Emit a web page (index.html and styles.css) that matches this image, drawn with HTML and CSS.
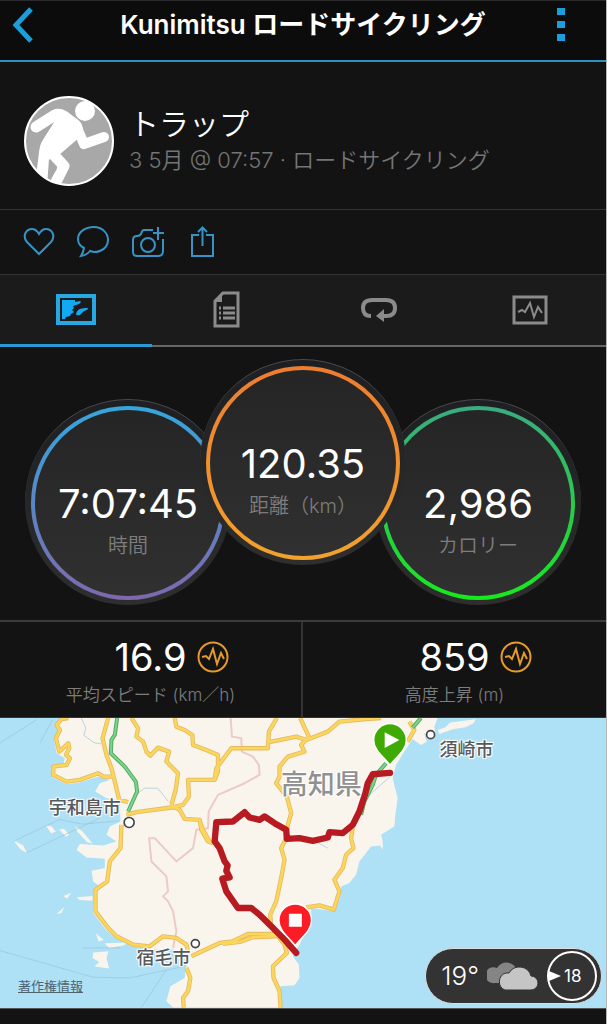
FILE: index.html
```html
<!DOCTYPE html>
<html lang="ja">
<head>
    <meta charset="UTF-8">
    <meta name="viewport" content="width=device-width, initial-scale=1.0">
    <title>Kunimitsu ロードサイクリング</title>
    <link rel="stylesheet" href="styles.css">
</head>
<body>
    <header class="header">
        <button class="icon-btn" aria-label="戻る">
            <svg width="22" height="36" viewBox="0 0 22 36"><path d="M19 2 4 18l15 16" fill="none" stroke="#1b9fdc" stroke-width="5"/></svg>
        </button>
        <h1>Kunimitsu ロードサイクリング</h1>
        <button class="icon-btn menu" aria-label="メニュー">
            <svg width="8" height="34" viewBox="0 0 8 34" fill="#1b9fdc"><path d="M0 0h8v7H0zM0 13h8v7H0zM0 26h8v7H0z"/></svg>
        </button>
    </header>

    <section class="profile">
        <svg class="avatar" viewBox="0 0 90 90">
            <defs><clipPath id="face"><circle cx="45" cy="45" r="44"/></clipPath></defs>
            <circle cx="45" cy="45" r="44" fill="#a8a8a8"/>
            <g clip-path="url(#face)" fill="#fff" stroke="#fff" stroke-linecap="round" stroke-linejoin="round">
                <circle cx="61" cy="15" r="10" stroke="none"/>
                <path d="M12 31 31 19" stroke-width="11" fill="none"/>
                <path d="M31 14q6-1 11 2l12 9q5 5 4 13L37 56l-13 7-2 27H12l4-34q1-8 4-12l12-19z" stroke-width="2"/>
                <path d="m54 34 6 14 20-7" stroke-width="10" fill="none"/>
                <path d="m28 57 12 13-9 18" stroke-width="11" fill="none"/>
            </g>
            <path d="m25 64 8 9-8 12z" fill="#a8a8a8"/>
            <circle cx="45" cy="45" r="44" fill="none" stroke="#fff" stroke-width="2"/>
        </svg>
        <div>
            <h2>トラップ</h2>
            <p>3 5月 @ 07:57 · ロードサイクリング</p>
        </div>
    </section>

    <div class="actions">
        <button class="icon-btn" aria-label="いいね">
            <svg width="32" height="32" viewBox="0 0 32 32"><path d="M16 28 4 16C-1 10 3 3 9 3q4 0 7 5 3-5 7-5c6 0 10 7 5 13z"/></svg>
        </button>
        <button class="icon-btn" aria-label="コメント">
            <svg width="32" height="32" viewBox="0 0 32 32"><path d="M17 1C8 1 1 6 1 13q0 6 6 9-1 5-3 8 6-1 9-5l4 1c8 0 14-5 14-12S25 1 17 1z"/></svg>
        </button>
        <button class="icon-btn" aria-label="写真を追加">
            <svg width="34" height="32" viewBox="0 0 34 32"><path d="M22 4H13q-2 0-3 4-1 2-4 2Q2 10 2 14v12q0 4 4 4h21q5 0 5-5V13"/><circle cx="17" cy="19" r="7"/><path d="M27 1v13M22 7h11"/></svg>
        </button>
        <button class="icon-btn" aria-label="共有">
            <svg width="32" height="32" viewBox="0 0 32 32"><path d="M12 9H5v21h21V9h-7M15.500 20V2M11 6l4.500-4.500L20 6"/></svg>
        </button>
    </div>

    <nav class="tabs">
        <button class="tab active" aria-label="地図">
            <svg width="40" height="32" viewBox="0 0 40 32"><path d="M2 2h36v27H2z" fill="none" stroke="#27a8e3" stroke-width="4"/><path d="M6 6h13v2l5-1q2 1-1 3l-6 2 1 2-2 2 2 2-3 2-1 2-4 1-1 2H6zM20 20q1-7 12-6 0 2-4 3l-4 4q-4 1-4-1z" fill="#11a9f2"/></svg>
        </button>
        <button class="tab" aria-label="統計">
            <svg width="28" height="38" viewBox="0 0 28 38"><path d="M10 2h15v33H2V10z" fill="none" stroke="#8b8b8b" stroke-width="3"/><path d="M9 1v10H1z" fill="#8b8b8b"/><path d="M6 17h2m2 0h12M6 22h2m2 0h12M6 27h2m2 0h12" stroke="#8b8b8b" stroke-width="3"/></svg>
        </button>
        <button class="tab" aria-label="ラップ">
            <svg width="38" height="28" viewBox="0 0 38 28"><path d="M11 20Q3 20 3 12t9-8h14q9 0 9 8t-9 8h-3" fill="none" stroke="#8b8b8b" stroke-width="4"/><path d="m16 20 8-7v13z" fill="#8b8b8b"/></svg>
        </button>
        <button class="tab" aria-label="グラフ">
            <svg width="36" height="30" viewBox="0 0 36 30"><path d="M2 2h32v26H2z" fill="none" stroke="#8b8b8b" stroke-width="3"/><path d="m6 17 4-2 3 2 5-9 4 14 4-10 4 6" fill="none" stroke="#8b8b8b" stroke-width="2"/></svg>
        </button>
    </nav>

    <main>
        <section class="gauges">
            <div class="gauge time">
                <div class="ring"><strong>7:07:45</strong><span>時間</span></div>
            </div>
            <div class="gauge distance">
                <div class="ring"><strong>120.35</strong><span>距離（km）</span></div>
            </div>
            <div class="gauge calories">
                <div class="ring"><strong>2,986</strong><span>カロリー</span></div>
            </div>
        </section>

        <section class="stats">
            <div class="stat">
                <div class="stat-value">
                    <strong>16.9</strong>
                    <button class="icon-btn" aria-label="スピードのグラフ">
                        <svg width="32" height="32" viewBox="0 0 32 32"><circle cx="16" cy="16" r="14.500"/><path d="m5 16 4-1 3 3 4-10 4 15 4-11 3 6"/></svg>
                    </button>
                </div>
                <span>平均スピード (km／h)</span>
            </div>
            <div class="stat">
                <div class="stat-value">
                    <strong>859</strong>
                    <button class="icon-btn" aria-label="高度のグラフ">
                        <svg width="32" height="32" viewBox="0 0 32 32"><circle cx="16" cy="16" r="14.500"/><path d="m5 16 4-1 3 3 4-10 4 15 4-11 3 6"/></svg>
                    </button>
                </div>
                <span>高度上昇 (m)</span>
            </div>
        </section>

        <section class="map">
            <svg class="map-canvas" viewBox="0 9 1821 870">
                <defs>
                    <path id="roads" d="M205 9 185 12 170 30 180 45 168 70 178 110 205 85 208 100 198 120 210 130 200 150 160 155 160 180 200 200 240 195 295 175 310 185 340 185
                        M325 9 308 70 320 120 335 160 345 200 358 255 385 262
                        M395 9 415 40 410 65 430 80 440 110 452 122 475 98 508 110 500 140 535 175 528 225 515 270
                        M380 300 410 292 515 278 550 270 568 245 565 195 645 195 655 170 655 120 620 105 580 90 578 60 555 45 530 35 525 9
                        M515 272 540 285 555 312 600 315 605 345 625 380 640 385M600 318 610 345 630 380
                        M365 330 362 400 330 440 322 500 287 525 287 590 325 640 350 665 400 690 450 695 490 665 530 670 560 690 565 710
                        M575 725 660 685 700 680 745 658 830 658 855 690 862 715 820 755 822 790 840 830 843 879M670 688 720 682 760 668 840 664
                        M560 760 572 790 565 830 550 850 552 879M645 195 650 160 695 100 725 100 805 100 808 50 832 9
                        M805 82 890 65 920 75 985 50 1020 20 1100 12 1145 9M902 9 928 65 905 90 915 110 865 125 840 155 840 185 830 205 862 245 875 295 865 330 858 375 845 400 855 435 845 490 830 560 812 600 815 640
                        M1060 340 1055 370 1062 400 1040 420 1030 460 1005 495 1020 530 1003 585 960 572 920 578M1225 80 1245 45 1230 20"/>
                    <path id="expressway" d="M352 9 345 60 335 75 333 115 375 155 408 200 412 230 385 290M1085 300 1095 260 1120 210 1130 180 1160 145M1240 38 1265 9"/>
                </defs>
                <!-- land -->
                <g fill="#f9f5ed">
                    <path d="M195 9 168 28 175 50 162 72 170 115 195 130 190 148 152 160 158 188 200 208 240 203 295 185 330 195 300 205 286 230 320 250 360 256 362 320 330 335 320 360 350 380 310 392 240 388 230 405 260 428 315 432 315 460 275 468 280 500 300 515 282 530 280 595 318 645 350 672 400 696 460 704 520 705 570 720 558 762 555 790 512 815 500 860 520 879 845 879 842 815 885 812 900 790 898 750 880 725 900 690 935 620 935 580 1002 590 1022 550 1025 515 1050 505 1070 480 1080 440 1115 395 1142 392 1150 405 1150 378 1145 360 1185 335 1188 300 1195 250 1180 190 1190 150 1215 110 1240 72 1265 90 1282 80 1275 55 1310 60 1305 35 1315 9z"/>
                    <path d="m1315 45 24-8 12-14 30-4 48-6-6 12-24 12-38 6-24 8-16 6zM138 332l16 2 14 16-14 6zM178 344l14-2 16 18-10 6zM226 334l20 14 32 38-16-4-30-32zM40 376l30 16 10 22-18-10zM190 544l24-10-12 18zM230 548l48-4v14l-40-2zM170 598l24-22-10 20zM288 656l24 20-16 4zM314 686l66-2-6 8-46 8zM280 714l46-4-6 20 8 32-44-6 14-14-20-12z"/>
                </g>
                <!-- ferry lines, rivers -->
                <path d="m0 84 110-70m48 0-38 70M40 380l138-66 70 14 110-10M80 414l220-104M0 708l280 80 110 2 170-36M250 700h110M500 765 425 879M244 9l14 30-6 22 30 22 22 4M414 236l20-16h40l32 40M955 384l30 16M1110 240l68-60" fill="none" stroke="#9bc3db" stroke-width="2"/>
                <!-- prefecture border -->
                <path d="M520 700 530 650 520 590 505 560 490 545 505 530 500 485 455 440 448 370 465 370 530 440 580 400 590 345 625 340 627 290 655 240 735 205 780 180 778 150 760 125 727 110 725 70 697 65 693 9" fill="none" stroke="#edcac6" stroke-width="6" stroke-linejoin="round"/>
                <g fill="none" stroke-linejoin="round">
                    <use href="#roads" stroke="#e5b960" stroke-width="13"/>
                    <use href="#roads" stroke="#fbd65c" stroke-width="8"/>
                    <use href="#expressway" stroke="#50aa62" stroke-width="12"/>
                    <use href="#expressway" stroke="#7bd58a" stroke-width="6"/>
                </g>
                <g fill="#fff" stroke="#444" stroke-width="5">
                    <circle cx="388" cy="323" r="15"/><circle cx="587" cy="687" r="12"/><circle cx="1294" cy="59" r="12"/>
                </g>
            </svg>
            <span class="place uwajima">宇和島市</span>
            <span class="place sukumo">宿毛市</span>
            <span class="place susaki">須崎市</span>
            <span class="place kochi">高知県</span>
            <svg class="map-canvas ride" viewBox="0 9 1821 870">
                <path d="M1172 174 1120 178 1105 205 1098 235 1080 290 1060 330 1030 355 990 352 985 368 940 378 900 370 862 372 860 345 825 325 795 305 780 315 750 308 735 292 700 320 650 322 645 380 660 400 675 440 684 452 680 468 690 488 668 492 680 530 715 580 755 580 780 600 815 635 855 675 890 715" fill="none" stroke="#b71a20" stroke-width="19" stroke-linejoin="round" stroke-linecap="round"/>
                <!-- start and finish pins -->
                <g stroke="#fff" stroke-width="4">
                    <path d="M1172 151c-12-20-49-42-49-76a49 49 0 0 1 98 0c0 34-37 56-49 76z" fill="#40aa05"/>
                    <path d="M887 693c-12-20-49-42-49-76a49 49 0 0 1 98 0c0 34-37 56-49 76z" fill="#fb1d25"/>
                </g>
                <path d="m1156 52 44 23-44 24zM868 597h39v39h-39z" fill="#fff"/>
            </svg>
            <a class="legal" href="#">著作権情報</a>

            <div class="weather">
                <span>19°</span>
                <svg width="52" height="30" viewBox="0 0 52 30">
                    <path d="M8 22a8 8 0 1 1 2-15 11 11 0 0 1 19 0v15z" fill="#858585"/>
                    <path d="M18 29a9 9 0 0 1 1-17h3a12 12 0 0 1 22 3 7 7 0 0 1 0 14z" fill="#c5c5c5" stroke="#333" stroke-width="1"/>
                </svg>
                <div class="wind">
                    <svg width="12" height="10" viewBox="0 0 12 10"><path d="m0 0 12 5-12 5z" fill="#fff"/></svg>
                    <span>18</span>
                </div>
            </div>
        </section>
    </main>
</body>
</html>
```
FILE: styles.css
```css
* {
    box-sizing: border-box;
}

body {
    margin: 0;
    min-height: 100vh;
    background: #131313;
    border-right: 1px solid #b5b5b5;
    color: #fff;
    font-family: Inter, "Noto Sans CJK JP", sans-serif;
}

h1, h2, p {
    margin: 0;
    font-weight: 400;
}

svg {
    display: block;
}

.icon-btn, .tab {
    padding: 0;
    border: 0;
    background: none;
    cursor: pointer;
}

.header {
    display: grid;
    grid-template-columns: 1fr auto 1fr;
    align-items: center;
    height: 62px;
    padding: 0 12px 12px;
    background: #0c0c0c;
    border-top: 1px solid #2b2b2b;
    border-bottom: 2px solid #2f8fc4;
}

.header .icon-btn {
    justify-self: start;
}

.header .menu {
    justify-self: end;
    padding: 0 29px;
    margin-right: 0;
    padding-left: 0;
}

.header h1 {
    font-size: 26px;
    font-weight: 600;
    line-height: 36px;
}

.profile {
    display: flex;
    gap: 15px;
    padding: 34px 24px 23px;
    border-bottom: 1px solid #333;
}

.avatar {
    width: 90px;
    height: 90px;
    flex: none;
}

.profile h2 {
    margin-top: 8px;
    font-size: 30px;
    line-height: 40px;
    font-weight: 350;
}

.profile p {
    color: #757575;
    font-size: 22px;
    line-height: 32px;
    font-weight: 350;
}

.actions {
    display: flex;
    gap: 22px;
    padding: 16px 23px;
    border-bottom: 1px solid #333;
}

.actions svg {
    fill: none;
    stroke: #3793c4;
    stroke-width: 2;
}

.tabs {
    display: grid;
    grid-template-columns: repeat(4, 1fr);
    height: 72px;
    background: #1b1b1b;
}

.tab {
    display: flex;
    justify-content: center;
    align-items: center;
    border-bottom: 2px solid #666;
}

.tab.active {
    border-bottom: 3px solid #2a9bd2;
}

.gauges {
    display: flex;
    justify-content: center;
    align-items: flex-end;
    height: 273px;
    padding: 12px 0 15px;
}

.gauge {
    width: 206px;
    height: 206px;
    flex: none;
    padding: 6px;
    border-radius: 50%;
    border-top: 1px solid #4a4a4c;
    background: linear-gradient(#1e1f22, #2e2e2e);
}

.ring {
    display: flex;
    flex-direction: column;
    align-items: center;
    height: 194px;
    padding-top: 72px;
    border: 4px solid transparent;
    border-radius: 50%;
}

.gauge strong {
    font-size: 40px;
    line-height: 44px;
    font-weight: 400;
}

.gauge span {
    color: #7d7d7d;
    font-size: 20px;
    line-height: 40px;
    font-weight: 350;
}

.time .ring {
    background: linear-gradient(#252525, #303030) padding-box, linear-gradient(#35a6dc, #7e68ad) border-box;
}

.distance {
    position: relative;
    align-self: flex-start;
    margin: 0 -31px;
}

.distance .ring {
    background: linear-gradient(#252525, #303030) padding-box, linear-gradient(#ed7d31, #f2a22c) border-box;
}

.calories .ring {
    background: linear-gradient(#252525, #303030) padding-box, linear-gradient(#3aab80, #16ea1c) border-box;
}

.stats {
    display: grid;
    grid-template-columns: 1fr 1fr;
    border-top: 2px solid #3b3b3b;
    border-bottom: 1px solid #333;
}

.stat {
    height: 95px;
    padding-top: 13px;
    color: #7d7d7d;
    font-size: 17px;
    line-height: 32px;
    font-weight: 350;
    text-align: center;
}

.stat:first-child {
    border-right: 2px solid #333;
}

.stat-value {
    display: grid;
    grid-template-columns: 1fr auto 1fr;
    column-gap: 10px;
    align-items: center;
}

.stat-value strong {
    grid-column: 2;
    color: #fff;
    font-size: 38px;
    line-height: 44px;
    font-weight: 400;
}

.stat-value .icon-btn {
    justify-self: start;
}

.stat-value svg {
    fill: none;
    stroke: #e59a2d;
    stroke-width: 2;
}

.map {
    position: relative;
    background: #aee0f6;
    border-bottom: 1px solid #555;
}

.map-canvas {
    width: 100%;
}

.ride {
    position: absolute;
    top: 0;
    left: 0;
}

.place {
    position: absolute;
    transform: translate(-50%, -50%);
    color: #58595b;
    font-size: 18px;
    line-height: 24px;
    font-weight: 500;
    white-space: nowrap;
    text-shadow: 1px 1px 1px #fff, -1px -1px 1px #fff, 1px -1px 1px #fff, -1px 1px 1px #fff;
}

.uwajima {
    left: 14%;
    top: 31%;
}

.sukumo {
    left: 27%;
    top: 83%;
}

.susaki {
    left: 77%;
    top: 11%;
}

.kochi {
    left: 53%;
    top: 23%;
    color: #929191;
    font-size: 27px;
}

.legal {
    position: absolute;
    left: 18px;
    bottom: 12px;
    color: #4d6470;
    font-size: 13px;
    line-height: 20px;
}

.weather {
    position: absolute;
    right: 4px;
    bottom: 4px;
    display: flex;
    align-items: center;
    gap: 8px;
    height: 56px;
    padding: 0 4px 0 15px;
    border: 1px solid #ddd;
    border-radius: 28px;
    background: #333;
    font-size: 26px;
    font-weight: 300;
}

.wind {
    display: flex;
    align-items: center;
    gap: 3px;
    width: 50px;
    height: 50px;
    border: 2px solid #fff;
    border-radius: 50%;
    font-size: 17px;
    font-weight: 400;
}
```
